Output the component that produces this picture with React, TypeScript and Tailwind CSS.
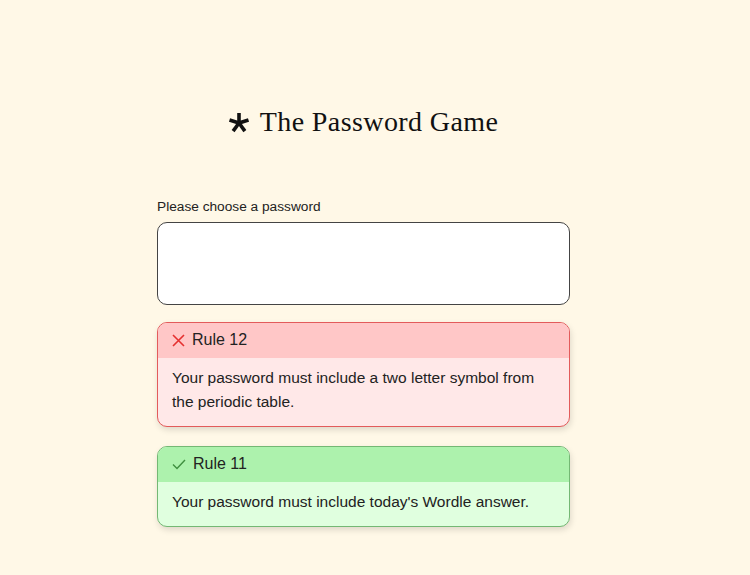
const Rule = ({
  n,
  text,
  ok,
}: {
  n: number;
  text: string;
  ok: boolean;
}) => {
  return (
    <div
      className={
        ok
          ? "rounded-[10px] border border-[#74b874] bg-[#e0ffdf] overflow-hidden shadow-[1px_3px_6px_rgba(0,0,0,0.13)]"
          : "rounded-[10px] border border-[#e35b5b] bg-[#ffe8e8] overflow-hidden shadow-[1px_3px_6px_rgba(0,0,0,0.13)]"
      }
    >
      <div
        className={
          ok
            ? "h-[35px] flex items-center gap-[7px] px-[14px] bg-[#adf2ad]"
            : "h-[35px] flex items-center gap-[7px] px-[14px] bg-[#ffc7c7]"
        }
      >
        {ok ? (
          <svg width="14" height="14" viewBox="0 0 14 14" fill="none">
            <path d="M1 7.5 L5 11.5 L13 3" stroke="#3f8f3f" strokeWidth="1.4" />
          </svg>
        ) : (
          <svg width="13" height="13" viewBox="0 0 13 13" fill="none">
            <path d="M1 1 L12 12 M12 1 L1 12" stroke="#e5302f" strokeWidth="1.6" />
          </svg>
        )}
        <span className="text-[16px] text-[#222]">Rule {n}</span>
      </div>
      <div className="px-[14px] pt-2 pb-3 text-[15.5px] leading-6 text-[#222]">{text}</div>
    </div>
  );
};

// five-armed asterisk mark beside the title
const Asterisk = () => {
  const arms = [-90, -18, 54, 126, 198];
  return (
    <svg width="20" height="22" viewBox="-10 -11 20 22" className="mt-[2px]">
      {arms.map((a) => {
        const r = (a * Math.PI) / 180;
        return (
          <line
            key={a}
            x1="0"
            y1="0"
            x2={(Math.cos(r) * 10).toFixed(2)}
            y2={(Math.sin(r) * 10).toFixed(2)}
            stroke="#111"
            strokeWidth="3.6"
          />
        );
      })}
    </svg>
  );
};

export default function App() {
  return (
    <div
      className="min-h-[575px] w-full pr-[23px] bg-[#fff8e7] flex flex-col items-center"
      style={{ fontFamily: "Arial, 'Liberation Sans', sans-serif" }}
    >
      {/* Title */}
      <h1 className="mt-[101px] flex items-center gap-[11px] text-[#111]">
        <Asterisk />
        <span className="text-[28px] font-['Liberation_Serif',serif] tracking-[0.4px]">
          The Password Game
        </span>
      </h1>

      <div className="w-[413px] mt-[54px] flex flex-col">
        <label className="text-[13.7px] text-[#222] mb-[4px]">Please choose a password</label>
        <div className="h-[83px] rounded-[10px] border border-[#444] bg-white" />

        <div className="mt-[17px] flex flex-col gap-[19px]">
          <Rule
            n={12}
            ok={false}
            text="Your password must include a two letter symbol from the periodic table."
          />
          <Rule n={11} ok={true} text="Your password must include today's Wordle answer." />
        </div>
      </div>
    </div>
  );
}
